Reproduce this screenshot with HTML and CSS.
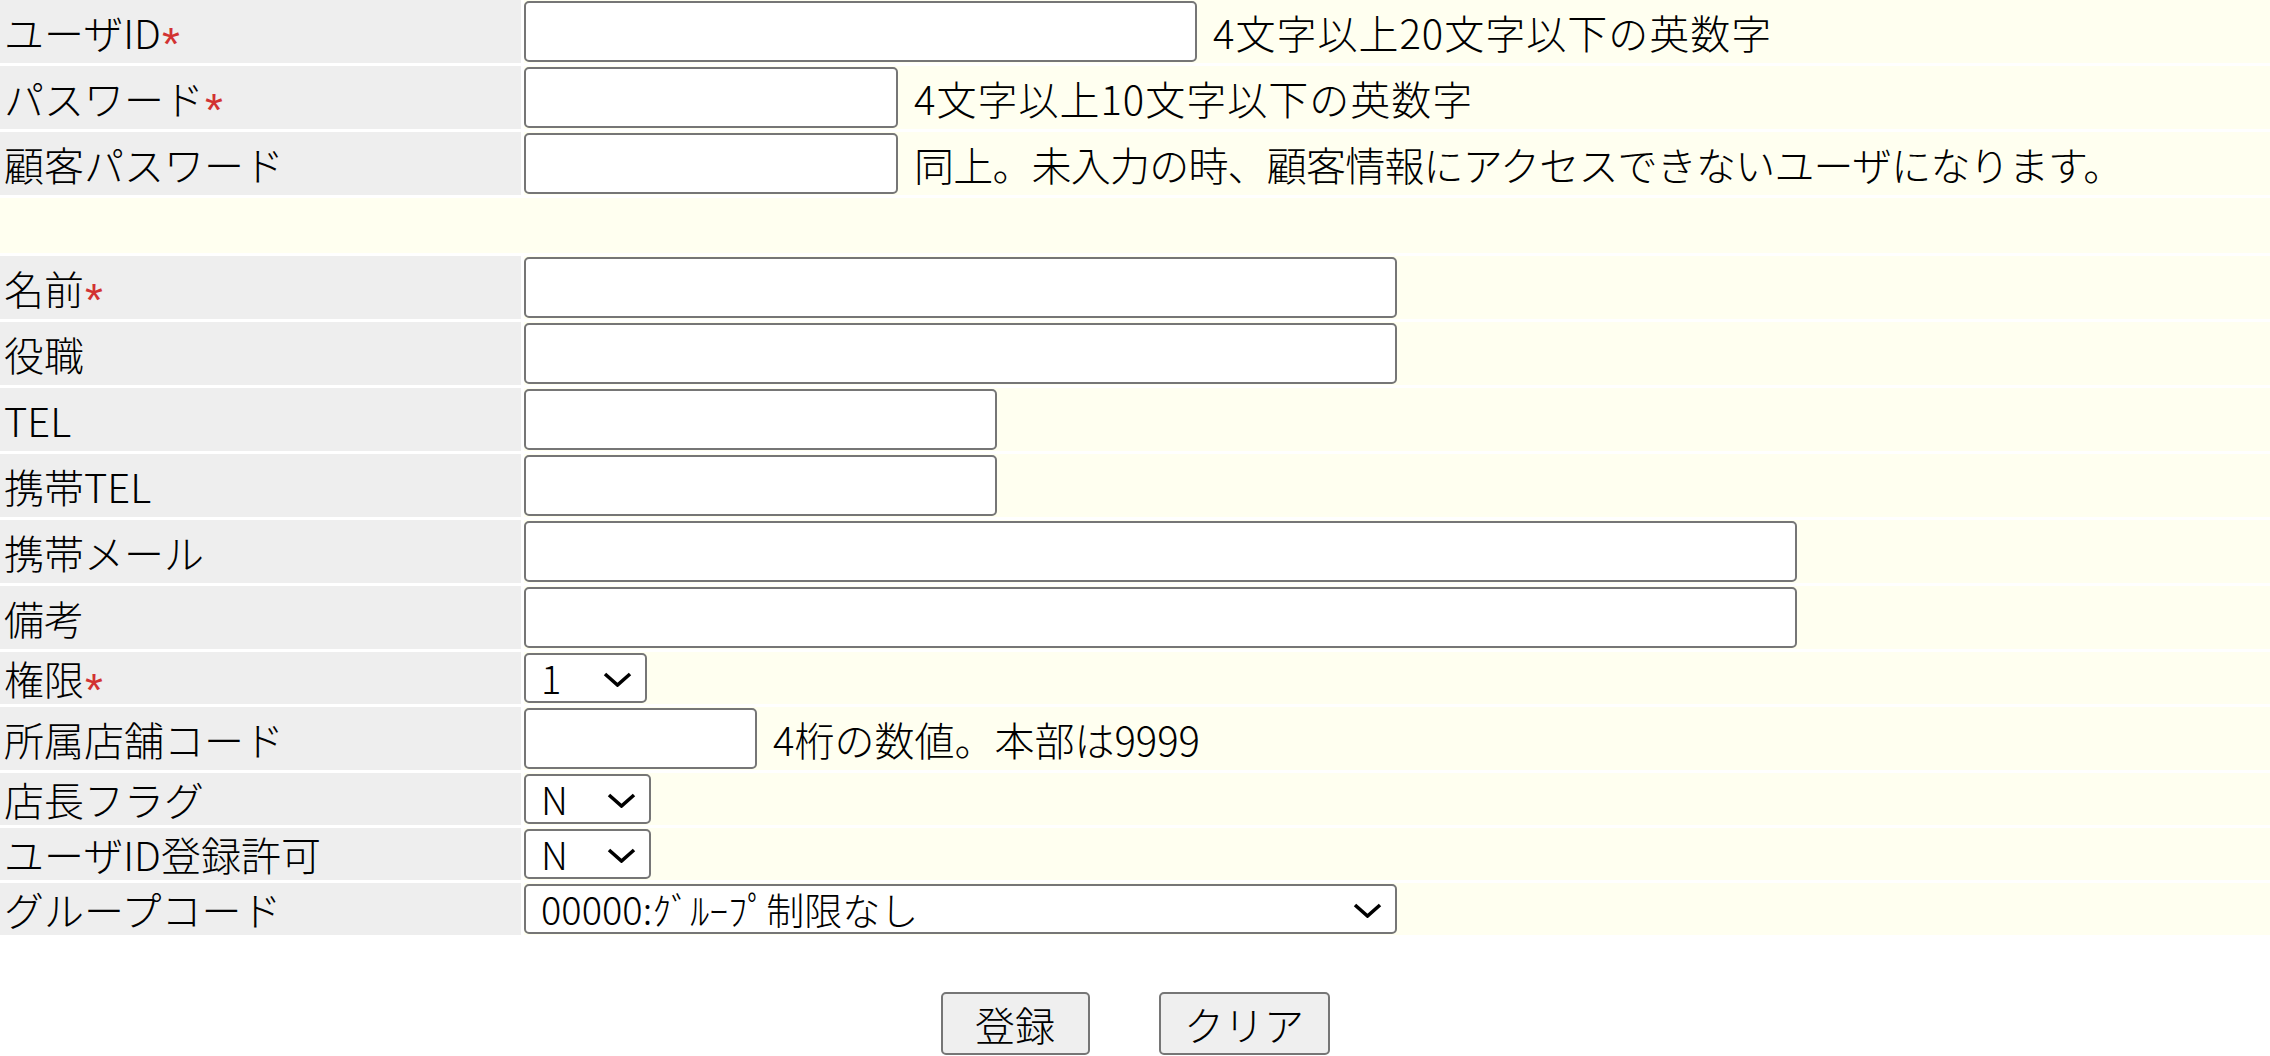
FILE: index.html
```html
<!DOCTYPE html>
<html lang="ja">
<head>
<meta charset="utf-8">
<title>ユーザ登録</title>
<link rel="stylesheet" href="styles.css">
</head>
<body>
<form class="user-form">
  <table class="form-table">
    <tr class="row-input">
      <th>ユーザID<span class="req">*</span></th>
      <td><div class="field"><input type="text" class="in in-userid"><span class="hint hint-wide">4文字以上20文字以下の英数字</span></div></td>
    </tr>
    <tr class="row-input">
      <th>パスワード<span class="req">*</span></th>
      <td><div class="field"><input type="password" class="in in-pass"><span class="hint hint-wide">4文字以上10文字以下の英数字</span></div></td>
    </tr>
    <tr class="row-input">
      <th>顧客パスワード</th>
      <td><div class="field"><input type="password" class="in in-pass"><span class="hint hint-tight">同上。未入力の時、顧客情報にアクセスできないユーザになります。</span></div></td>
    </tr>
    <tr class="row-spacer">
      <td colspan="2"></td>
    </tr>
    <tr class="row-input">
      <th>名前<span class="req">*</span></th>
      <td><div class="field"><input type="text" class="in in-name"></div></td>
    </tr>
    <tr class="row-input">
      <th>役職</th>
      <td><div class="field"><input type="text" class="in in-name"></div></td>
    </tr>
    <tr class="row-input">
      <th>TEL</th>
      <td><div class="field"><input type="text" class="in in-tel"></div></td>
    </tr>
    <tr class="row-input">
      <th>携帯TEL</th>
      <td><div class="field"><input type="text" class="in in-tel"></div></td>
    </tr>
    <tr class="row-input">
      <th>携帯メール</th>
      <td><div class="field"><input type="text" class="in in-wide"></div></td>
    </tr>
    <tr class="row-input">
      <th>備考</th>
      <td><div class="field"><input type="text" class="in in-wide"></div></td>
    </tr>
    <tr class="row-select">
      <th>権限<span class="req">*</span></th>
      <td><div class="field"><span class="sel sel-auth"><select><option>1</option><option>2</option><option>3</option></select><svg class="chev" viewBox="0 0 29 15" width="29" height="15"><polyline points="2,2 14.5,13 27,2"/></svg></span></div></td>
    </tr>
    <tr class="row-input">
      <th>所属店舗コード</th>
      <td><div class="field"><input type="text" class="in in-shop"><span class="hint">4桁の数値。本部は9999</span></div></td>
    </tr>
    <tr class="row-select">
      <th>店長フラグ</th>
      <td><div class="field"><span class="sel sel-yn"><select><option>N</option><option>Y</option></select><svg class="chev" viewBox="0 0 29 15" width="29" height="15"><polyline points="2,2 14.5,13 27,2"/></svg></span></div></td>
    </tr>
    <tr class="row-select">
      <th>ユーザID登録許可</th>
      <td><div class="field"><span class="sel sel-yn"><select><option>N</option><option>Y</option></select><svg class="chev" viewBox="0 0 29 15" width="29" height="15"><polyline points="2,2 14.5,13 27,2"/></svg></span></div></td>
    </tr>
    <tr class="row-select">
      <th>グループコード</th>
      <td><div class="field"><span class="sel sel-group"><select><option>00000:ｸﾞﾙｰﾌﾟ制限なし</option></select><svg class="chev" viewBox="0 0 29 15" width="29" height="15"><polyline points="2,2 14.5,13 27,2"/></svg></span></div></td>
    </tr>
  </table>
  <div class="actions">
    <button type="submit" class="btn btn-submit">登録</button>
    <button type="reset" class="btn btn-clear">クリア</button>
  </div>
</form>
</body>
</html>
```
FILE: styles.css
```css
html, body {
  margin: 0;
  padding: 0;
  background: #ffffff;
}

body {
  font-family: "Noto Sans CJK JP", "Noto Sans", sans-serif;
  font-size: 40px;
  font-weight: 300;
  color: #000000;
  overflow: hidden;
}

.user-form {
  margin: 0;
}

.form-table {
  width: calc(100% + 6px);
  margin: -3px -3px 0 -3px;
  border-collapse: separate;
  border-spacing: 3px;
  table-layout: fixed;
}

.form-table th {
  width: 521px;
  box-sizing: border-box;
  padding: 0 0 0 4px;
  background: #eeeeee;
  font-weight: 300;
  text-align: left;
  vertical-align: middle;
  white-space: nowrap;
  line-height: 44px;
}

.form-table td {
  padding: 1px 0;
  background: #fffff0;
  vertical-align: middle;
}

.row-input th,
.row-input td {
  height: 63px;
  box-sizing: border-box;
}

.row-select th,
.row-select td {
  height: 52px;
  box-sizing: border-box;
}

.row-spacer td {
  height: 55px;
  padding: 0;
}

.req {
  color: #d23232;
  font-family: "Liberation Sans", sans-serif;
  font-size: 46px;
  font-weight: normal;
  line-height: 0;
  vertical-align: -11px;
  margin-left: 1px;
}

.field {
  display: flex;
  align-items: center;
}

.in {
  box-sizing: border-box;
  height: 61px;
  margin: 0;
  padding: 0 10px;
  border: 2px solid #767676;
  border-radius: 5px;
  background: #ffffff;
  font-family: inherit;
  font-size: 36px;
}

.in-userid { width: 673px; }
.in-pass   { width: 374px; }
.in-name   { width: 873px; }
.in-tel    { width: 473px; }
.in-wide   { width: 1273px; }
.in-shop   { width: 233px; }

.hint {
  margin-left: 16px;
  white-space: nowrap;
  line-height: 44px;
}

.hint-wide {
  letter-spacing: 1px;
}

.hint-tight {
  letter-spacing: -0.8px;
}

.sel {
  position: relative;
  display: inline-block;
}

.sel select {
  box-sizing: border-box;
  height: 50px;
  width: 100%;
  margin: 0;
  padding: 0 50px 0 15px;
  border: 2px solid #767676;
  border-radius: 5px;
  background: #ffffff;
  color: #000000;
  font-family: inherit;
  font-size: 38px;
  font-weight: 300;
  line-height: 1;
  -webkit-appearance: none;
  appearance: none;
  display: block;
}

.sel-auth  { width: 123px; }
.sel-yn    { width: 127px; }
.sel-group { width: 873px; }

.chev {
  position: absolute;
  right: 15px;
  top: 50%;
  margin-top: -6px;
  pointer-events: none;
}

.chev polyline {
  fill: none;
  stroke: #000000;
  stroke-width: 3.6;
  stroke-linecap: butt;
  stroke-linejoin: miter;
}

.actions {
  display: flex;
  justify-content: center;
  gap: 69px;
  margin-top: 54px;
}

.btn {
  box-sizing: border-box;
  height: 63px;
  margin: 0;
  padding: 0;
  border: 2px solid #767676;
  border-radius: 5px;
  background: #efefef;
  color: #000000;
  font-family: inherit;
  font-size: 40px;
  font-weight: 300;
  line-height: 1;
}

.btn-submit { width: 149px; }
.btn-clear  { width: 171px; }
```
